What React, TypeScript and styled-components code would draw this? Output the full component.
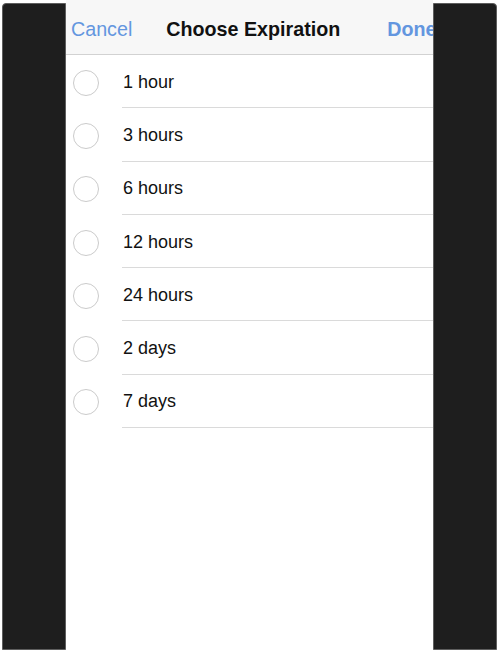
import React from "react";
import styled, { createGlobalStyle } from "styled-components";

const Global = createGlobalStyle`
  html, body { margin: 0; padding: 0; background: #ffffff; }
  body { font-family: "Liberation Sans", Arial, Helvetica, sans-serif; }
  * { box-sizing: border-box; }
`;

const Page = styled.div`
  display: flex;
  width: 500px;
  height: 652px;
  padding-left: 2px;
  background: #ffffff;
  overflow: hidden;
`;

const SidePanel = styled.div<{ $side: "left" | "right" }>`
  width: 64px;
  flex: none;
  margin: 3px 0 2px;
  background: #1e1e1e;
  border: 1px solid #5e5e5e;
  border-radius: ${(p) => (p.$side === "left" ? "4px 0 0 0" : "0 4px 0 0")};
`;

const Screen = styled.div`
  width: 367px;
  flex: none;
  display: flex;
  flex-direction: column;
  background: #ffffff;
  overflow: hidden;
`;

const Header = styled.div`
  display: flex;
  align-items: center;
  height: 55px;
  padding-top: 4px;
  background: #f7f7f7;
  border-bottom: 1px solid #d2d2d2;
  white-space: nowrap;
  flex: none;
`;

const NavButton = styled.span<{ $gap: number; $strong?: boolean }>`
  margin-left: ${(p) => p.$gap}px;
  font-size: 19.7px;
  font-weight: ${(p) => (p.$strong ? 700 : 400)};
  color: #6396df;
`;

const Title = styled.span`
  margin-left: 34px;
  font-size: 19.7px;
  font-weight: 700;
  color: #111111;
`;

const List = styled.div`
  display: flex;
  flex-direction: column;
`;

const Row = styled.div`
  display: flex;
  height: 53.3px;
`;

const RadioCell = styled.div`
  width: 56px;
  flex: none;
  display: flex;
  align-items: center;
  padding: 2px 0 0 7px;
`;

const Radio = styled.span`
  width: 26px;
  height: 26px;
  border-radius: 50%;
  border: 1.5px solid #cbcbcb;
`;

const Label = styled.div`
  flex: 1;
  display: flex;
  align-items: center;
  padding: 2px 0 0 1px;
  border-bottom: 1px solid #dadada;
  font-size: 18px;
  color: #111111;
`;

const options = ["1 hour", "3 hours", "6 hours", "12 hours", "24 hours", "2 days", "7 days"];

export default function App() {
  return (
    <>
      <Global />
      <Page>
        <SidePanel $side="left" />
        <Screen>
          <Header>
            <NavButton $gap={5}>Cancel</NavButton>
            <Title>Choose Expiration</Title>
            <NavButton $gap={47} $strong>
              Done
            </NavButton>
          </Header>
          <List>
            {options.map((o) => (
              <Row key={o}>
                <RadioCell>
                  <Radio />
                </RadioCell>
                <Label>{o}</Label>
              </Row>
            ))}
          </List>
        </Screen>
        <SidePanel $side="right" />
      </Page>
    </>
  );
}
